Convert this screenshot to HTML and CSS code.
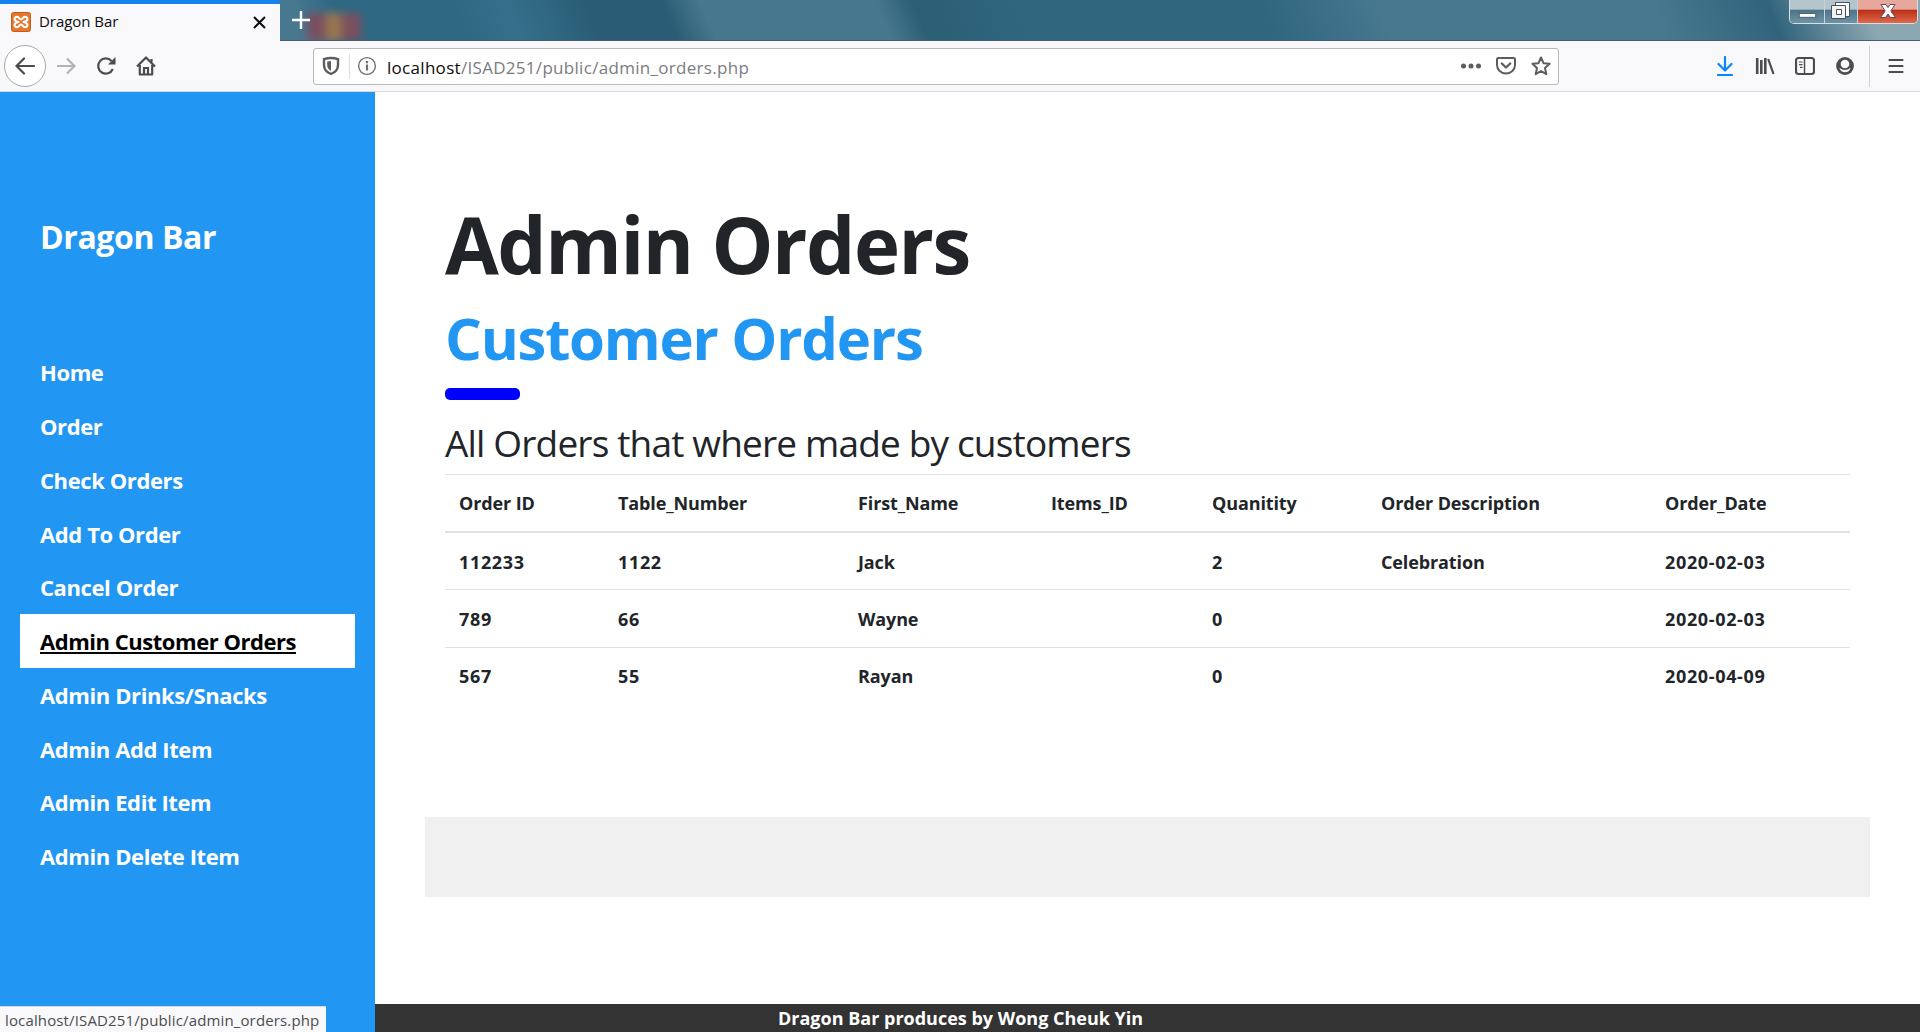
FILE: index.html
```html
<!DOCTYPE html>
<html lang="en">
<head>
<meta charset="utf-8">
<title>Dragon Bar</title>
<link rel="stylesheet" href="styles.css">
</head>
<body>
<header class="browser">
  <div class="titlebar">
    <div class="tab">
      <svg class="favicon" width="20" height="20" viewBox="0 0 20 20"><rect x=".5" y=".5" width="19" height="19" rx="2" fill="#e8752a" stroke="#c25c1b"/><path d="M7.500 10C2 9 3 4.800 6 4.800C8.500 4.800 8 7.500 10 7.500S11.500 4.800 14 4.800C17 4.800 18 9 12.500 10C18 11 17 15.200 14 15.200C11.500 15.200 12 12.500 10 12.500S8.500 15.200 6 15.200C3 15.200 2 11 7.500 10Z" fill="none" stroke="#fff" stroke-width="2.200" stroke-linejoin="round"/></svg>
      <span class="tab-title">Dragon Bar</span>
      <svg class="tab-close" width="13" height="13" viewBox="0 0 13 13"><path d="M1 1L12 12M12 1L1 12" stroke="#0c0c0d" stroke-width="2"/></svg>
    </div>
    <svg class="new-tab" width="18" height="18" viewBox="0 0 18 18"><path d="M9 0V18M0 9H18" stroke="#fff" stroke-width="2.400"/></svg>
    <div class="desktop-blur"></div>
    <div class="win-controls">
      <span class="win win-min"><svg width="34" height="23" viewBox="0 0 35 23"><rect x="9.500" y="13.500" width="17" height="4" fill="#fff" stroke="#48606d"/></svg></span>
      <span class="win win-max"><svg width="32" height="23" viewBox="0 0 32 23"><g stroke="#48505f" stroke-width="1"><path d="M10.500 2.500H24.500V16.500H10.500Z" fill="#fff"/><path d="M6.500 5.500H20.500V18.500H6.500ZM11.500 9.500V14.500H16.500V9.500Z" fill="#f4f4f6" fill-rule="evenodd"/></g></svg></span>
      <span class="win win-close"><svg width="59" height="23" viewBox="0 0 59 23"><path d="M23 4.500H28L30 7.500L32 4.500H37L32.800 11L37.500 17.500H32.500L30 14L27.500 17.500H22.500L27.200 11Z" fill="#fff" stroke="#5c4b57"/></svg></span>
    </div>
  </div>
  <nav class="toolbar">
    <span class="back"><svg width="20" height="20" viewBox="0 0 20 20"><path d="M19 10H2M9 2.500L1.500 10L9 17.500" class="line" stroke-linecap="round"/></svg></span>
    <svg class="forward" width="20" height="20" viewBox="0 0 20 20"><path d="M1 10H18M11 2.500L18.500 10L11 17.500" class="line"/></svg>
    <svg class="reload" width="20" height="20" viewBox="0 0 20 20"><path d="M16.800 13A7.600 7.600 0 1 1 15.500 5" class="line"/><path d="M19.500 1V8.500H12Z" fill="#4c4c4f"/></svg>
    <svg class="home" width="20" height="20" viewBox="0 0 20 20"><path d="M1 10.500L10 1.500L19 10.500M3.800 9V18.500H16.200V9" class="line" stroke-linejoin="round"/><path d="M8 18V12H12V18M15.500 3V6" class="line"/></svg>
    <div class="url">
      <svg class="shield" width="18" height="20" viewBox="0 0 18 20"><path d="M9 2C12 2 14 2.500 16 3.200V9C16 13.500 13 16.500 9 18C5 16.500 2 13.500 2 9V3.200C4 2.500 6 2 9 2Z" fill="none" stroke="#5c5c60" stroke-width="2.400"/><path d="M9 5V15C6.500 13.500 5.200 11.500 5.200 9V5.500Z" fill="#5c5c60"/></svg>
      <span class="url-sep"></span>
      <svg class="info" width="20" height="20" viewBox="0 0 20 20"><circle cx="10" cy="10" r="8.400" fill="none" stroke="#707074" stroke-width="1.400"/><path d="M10 8.500V14.500M10 5V7.200" stroke="#707074" stroke-width="2.200"/></svg>
      <span class="address"><span class="host">localhost</span>/ISAD251/public/admin_orders.php</span>
      <svg class="dots" width="22" height="20" viewBox="0 0 22 20"><g fill="#5c5c60"><circle cx="3.500" cy="10" r="2.500"/><circle cx="11" cy="10" r="2.500"/><circle cx="18.500" cy="10" r="2.500"/></g></svg>
      <svg class="pocket" width="20" height="20" viewBox="0 0 20 20"><path d="M2.500 2H17.500Q19 2 19 3.500V9A9 8.500 0 0 1 1 9V3.500Q1 2 2.500 2Z" fill="none" stroke="#5c5c60" stroke-width="2"/><path d="M5.800 7.500L10 11.500L14.200 7.500" fill="none" stroke="#5c5c60" stroke-width="2.400" stroke-linecap="round" stroke-linejoin="round"/></svg>
      <svg class="star" width="20" height="20" viewBox="0 0 20 20"><path d="M10 1.500L12.500 7.200L18.600 7.800L14 12L15.300 18.200L10 15L4.700 18.200L6 12L1.400 7.800L7.500 7.200Z" fill="none" stroke="#5c5c60" stroke-width="2" stroke-linejoin="round"/></svg>
    </div>
    <div class="tools">
      <svg width="20" height="20" viewBox="0 0 20 20"><path d="M10 1V14M3.500 8L10 14.500L16.500 8M3 19H17" fill="none" stroke="#0a84ff" stroke-width="2.200" stroke-linecap="round" stroke-linejoin="round"/></svg>
      <svg width="20" height="20" viewBox="0 0 20 20"><path d="M2.200 2V18M6.300 4V18M10.300 2V18" class="line thick"/><path d="M13.200 3L18.500 18" class="line"/></svg>
      <svg width="20" height="20" viewBox="0 0 20 20"><rect x="1" y="2" width="18" height="16" rx="2.500" class="line"/><path d="M9.500 2V18" stroke="#4c4c4f" stroke-width="1.500"/><path d="M4 6H7.500M4 8.700H7.500M5 11.400H7.500" stroke="#4c4c4f" stroke-width="1.200"/></svg>
      <svg width="20" height="20" viewBox="0 0 20 20"><circle cx="10" cy="10" r="8.900" fill="#4c4c4f"/><circle cx="10" cy="8" r="4.300" fill="#f9f9fb"/><path d="M4.300 11.800Q10 16.400 15.700 11.800Q14.200 16.300 10 16.300T4.300 11.800Z" fill="#f9f9fb"/></svg>
    </div>
    <span class="tool-sep"></span>
    <svg class="menu" width="20" height="20" viewBox="0 0 20 20"><path d="M3.500 4H16.500M3.500 10H16.500M3.500 16H16.500" class="line" stroke-linecap="round"/></svg>
  </nav>
</header>
<div class="page">
  <aside class="sidebar">
    <h3 class="brand">Dragon Bar</h3>
    <nav class="links">
      <a>Home</a>
      <a>Order</a>
      <a>Check Orders</a>
      <a>Add To Order</a>
      <a>Cancel Order</a>
      <a class="active">Admin Customer Orders</a>
      <a>Admin Drinks/Snacks</a>
      <a>Admin Add Item</a>
      <a>Admin Edit Item</a>
      <a>Admin Delete Item</a>
    </nav>
  </aside>
  <div class="content">
    <main class="main">
      <h1>Admin Orders</h1>
      <h2>Customer Orders</h2>
      <hr class="rule">
      <p class="lead">All Orders that where made by customers</p>
      <table class="orders">
        <colgroup><col class="c1"><col class="c2"><col class="c3"><col class="c4"><col class="c5"><col class="c6"><col class="c7"></colgroup>
        <thead><tr><th>Order ID</th><th>Table_Number</th><th>First_Name</th><th>Items_ID</th><th>Quanitity</th><th>Order Description</th><th>Order_Date</th></tr></thead>
        <tbody>
          <tr><td class="num">112233</td><td class="num">1122</td><td>Jack</td><td></td><td class="num">2</td><td>Celebration</td><td class="num">2020-02-03</td></tr>
          <tr><td class="num">789</td><td class="num">66</td><td>Wayne</td><td></td><td class="num">0</td><td></td><td class="num">2020-02-03</td></tr>
          <tr><td class="num">567</td><td class="num">55</td><td>Rayan</td><td></td><td class="num">0</td><td></td><td class="num">2020-04-09</td></tr>
        </tbody>
      </table>
    </main>
    <div class="panel"></div>
    <footer class="footer">Dragon Bar produces by Wong Cheuk Yin</footer>
  </div>
</div>
<div class="status">localhost/ISAD251/public/admin_orders.php</div>
</body>
</html>
```
FILE: styles.css
```css
* { box-sizing: border-box; }

body {
  margin: 0;
  height: 1032px;
  overflow: hidden;
  display: flex;
  flex-direction: column;
  background: #fff;
  color: #212529;
  font-family: "Open Sans", "Noto Sans", sans-serif;
}

svg { display: block; flex: none; }
.line { fill: none; stroke: #4c4c4f; stroke-width: 2.2; }
.thick { stroke-width: 2.6; }

/* Browser window frame */
.titlebar {
  display: flex;
  height: 41px;
  border-bottom: 1px solid #4d5c6b;
  background: linear-gradient(66deg, #47788f 0 16%, #2e6883 18% 24%, #356f8b 27%, #2a5d75 31% 35%, #47778e 37% 46%, #2b5f76 48%, #30677f 54% 66%, #477890 72% 86%, #31647c 92%, #8ba7b2 97%);
}
.tab {
  display: flex;
  align-items: center;
  width: 280px;
  height: 41px;
  padding: 0 14px 1px 11px;
  flex: none;
  background: #f9f9fb;
  border-top: 4px solid #1683ec;
}
.tab-title { margin: -2px 0 0 8px; font-size: 15px; letter-spacing: -0.05px; color: #0c0c0d; }
.tab-close { margin-left: auto; }
.new-tab { margin: 11px 0 0 12px; position: relative; z-index: 1; }
.desktop-blur {
  width: 54px;
  height: 28px;
  margin: 13px 0 0 -3px;
  background: linear-gradient(90deg, #7b4f5f 30%, #97784f 40% 58%, #7b4f5f 70%);
  filter: blur(4px);
  clip-path: inset(-8px -8px 1px -8px);
}
.win-controls {
  display: flex;
  height: 24px;
  margin: 0 2px 0 auto;
  border: 1px solid #d4e0e5;
  border-top: 0;
  border-radius: 0 0 5px 5px;
  overflow: hidden;
}
.win + .win { border-left: 1px solid #c6d2d8; }
.win-min, .win-max { background: linear-gradient(#b4c5cd 0 40%, #4d7487 44%, #6f94a4); }
.win-close { background: linear-gradient(#e8a79c 0 40%, #b92e16 44%, #e0694c); }

.toolbar {
  display: flex;
  align-items: center;
  height: 51px;
  padding: 0 14px 0 4px;
  background: #f9f9fb;
  border-bottom: 1px solid #d9d9dd;
}
.back {
  display: flex;
  align-items: center;
  justify-content: center;
  width: 42px;
  height: 42px;
  border: 1px solid #a9a9ad;
  border-radius: 50%;
  background: #fff;
}
.forward { margin-left: 10px; opacity: .4; }
.reload, .home { margin-left: 20px; }
.url {
  display: flex;
  align-items: center;
  width: 1246px;
  height: 37px;
  margin-left: 157px;
  padding: 0 7px 0 8px;
  background: #fff;
  border: 1px solid #b8b8bc;
  border-radius: 3px;
}
.url-sep { width: 1px; height: 25px; margin: 0 7px 0 9px; background: #dcdcde; }
.address { margin: 2px 0 0 10px; font-size: 17px; letter-spacing: 0.3px; color: #7b7b7f; white-space: nowrap; }
.host { color: #0c0c0d; }
.dots { margin-left: auto; }
.pocket { margin-left: 14px; }
.star { margin-left: 15px; }
.tools { display: flex; gap: 20px; margin-left: auto; }
.tool-sep { width: 1px; height: 41px; margin: 0 16px 0 14px; background: #d0d0d4; }

/* Page */
.page { display: flex; height: 940px; }
.sidebar { width: 375px; flex: none; padding: 121px 20px 0; background: #2196f3; color: #fff; }
.brand { margin: 0; padding-left: 20px; font-size: 32px; line-height: 48px; font-weight: 700; letter-spacing: -0.4px; white-space: nowrap; }
.links { display: flex; flex-direction: column; margin-top: 84.3px; }
.links a { height: 53.75px; padding: 1px 0 0 20px; font-size: 22px; line-height: 53.75px; font-weight: 700; letter-spacing: -0.4px; white-space: nowrap; }
.links .active { background: #fff; color: #000; letter-spacing: -0.47px; text-decoration: underline; }

.content { display: flex; flex-direction: column; flex: 1; }
.main { height: 725px; padding: 104px 70px 0; }
h1, h2, p { margin: 0; white-space: nowrap; }
h1 { font-size: 78px; line-height: 96px; letter-spacing: -1.45px; }
h2 { margin-top: 10px; font-size: 58px; line-height: 72px; letter-spacing: -1.25px; color: #2196f3; }
.rule { width: 75px; height: 12px; margin: 14px 0 0; border: 0; border-radius: 5px; background: #00f; }
.lead { margin-top: 19px; font-size: 37px; line-height: 48px; letter-spacing: -0.83px; }
.orders {
  width: 1405px;
  margin-top: 7px;
  table-layout: fixed;
  border-spacing: 0;
  font-size: 18px;
  line-height: 24px;
  font-weight: 700;
  letter-spacing: -0.12px;
  text-align: left;
}
.c1 { width: 159px; } .c2 { width: 240px; } .c3 { width: 193px; } .c4 { width: 161px; }
.c5 { width: 169px; } .c6 { width: 284px; } .c7 { width: 199px; }
th { height: 59px; padding: 0 0 0 14px; border-top: 1px solid #dee2e6; border-bottom: 2px solid #dee2e6; }
td { height: 58px; padding: 0 0 0 14px; border-top: 1px solid #dee2e6; }
tbody tr:first-child td { height: 56px; padding-top: 2px; border-top: 0; }
tbody tr:last-child td { height: 57px; padding-bottom: 1px; }
.num { letter-spacing: 0.65px; }

.panel { height: 80px; margin: 0 50px; background: #f0f0f0; }
.footer { height: 28px; margin-top: 107px; padding-left: 403px; background: #333; color: #fff; font-size: 18px; line-height: 28px; font-weight: 700; white-space: nowrap; }

/* Link target shown over the page's lower left corner */
.status {
  position: absolute;
  left: 0;
  bottom: 0;
  width: 326px;
  height: 26px;
  padding-left: 5px;
  background: #f9f9fb;
  border-top: 1px solid #d5d5d8;
  color: #4c4c4f;
  font-size: 15px;
  letter-spacing: 0.14px;
  line-height: 27px;
  white-space: nowrap;
}
```
